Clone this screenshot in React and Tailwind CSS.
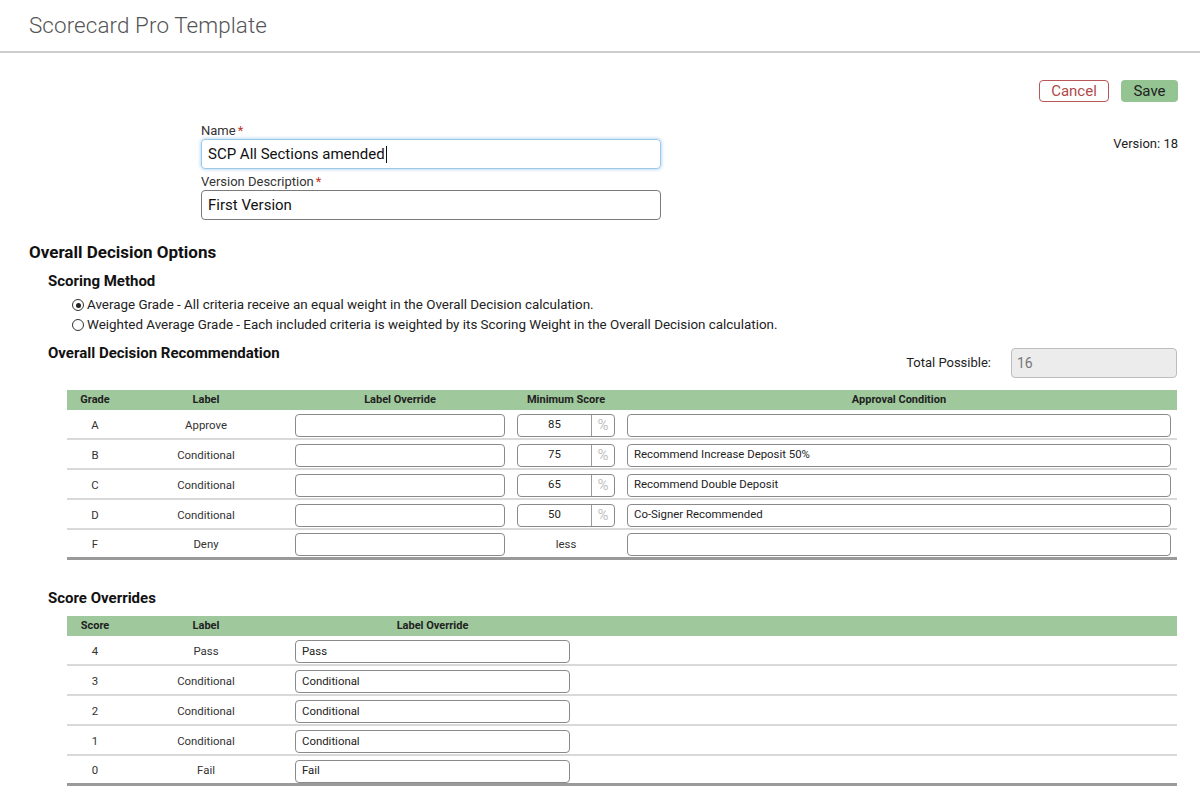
import React from "react";

const grades = [
  { g: "A", l: "Approve", min: "85", cond: "" },
  { g: "B", l: "Conditional", min: "75", cond: "Recommend Increase Deposit 50%" },
  { g: "C", l: "Conditional", min: "65", cond: "Recommend Double Deposit" },
  { g: "D", l: "Conditional", min: "50", cond: "Co-Signer Recommended" },
  { g: "F", l: "Deny", min: null, cond: "" },
];

const scores = [
  { s: "4", l: "Pass", o: "Pass" },
  { s: "3", l: "Conditional", o: "Conditional" },
  { s: "2", l: "Conditional", o: "Conditional" },
  { s: "1", l: "Conditional", o: "Conditional" },
  { s: "0", l: "Fail", o: "Fail" },
];

function Box({ children, className = "" }) {
  return (
    <div
      className={
        "h-[23px] rounded-[4px] border border-[#8a8a8a] bg-white flex items-center px-[6px] text-[11.4px] text-[#222] " +
        className
      }
    >
      {children}
    </div>
  );
}

function Radio({ checked }) {
  return (
    <span className="inline-flex w-[12px] h-[12px] rounded-full border border-[#333] items-center justify-center mr-[3px] shrink-0">
      {checked && <span className="w-[5px] h-[5px] rounded-full bg-[#222]" />}
    </span>
  );
}

export default function App() {
  return (
    <div
      className="w-[1200px] h-[812px] bg-white text-[#222] overflow-hidden"
      style={{ fontFamily: "Roboto, 'Liberation Sans', sans-serif" }}
    >
      {/* Header */}
      <div className="h-[53px] border-b-2 border-[#cdcdcd] flex items-center pl-[29px]">
        <div className="text-[22.4px] font-light text-[#555] tracking-[0.1px]">
          Scorecard Pro Template
        </div>
      </div>

      {/* Buttons */}
      <div className="flex justify-end gap-[12px] pr-[22px] pt-[27px]">
        <button className="h-[22px] w-[70px] rounded-[4px] border border-[#b75757] text-[#b04a4a] text-[15px] flex items-center justify-center leading-none">
          Cancel
        </button>
        <button className="h-[22px] w-[57px] rounded-[4px] bg-[#93c492] text-[#222] text-[15px] flex items-center justify-center leading-none">
          Save
        </button>
      </div>

      {/* Form */}
      <div className="flex mt-[21px] pr-[22px]">
        <div className="ml-[201px] w-[460px]">
          <div className="text-[13px] leading-[15px] text-[#333]">
            Name<span className="text-[#c0392b] ml-[2px]">*</span>
          </div>
          <div className="mt-[1px] h-[30px] rounded-[4px] border border-[#9cc9ea] shadow-[0_0_3px_1px_rgba(120,180,230,0.45)] flex items-center px-[6px] text-[15px] text-[#111]">
            SCP All Sections amended
            <span className="inline-block w-[1px] h-[17px] bg-[#111] ml-[1px]" />
          </div>
          <div className="mt-[5px] text-[13px] leading-[15px] text-[#333]">
            Version Description<span className="text-[#c0392b] ml-[2px]">*</span>
          </div>
          <div className="mt-[1px] h-[30px] rounded-[4px] border border-[#7a7a7a] flex items-center px-[6px] text-[15px] text-[#111]">
            First Version
          </div>
        </div>
        <div className="flex-1 text-right text-[13px] pt-[11px] text-[#222]">
          Version: 18
        </div>
      </div>

      {/* Overall Decision Options */}
      <div className="pl-[29px] pr-[23px]">
        <div className="mt-[22px] text-[17px] leading-[20px] font-bold text-[#111]">
          Overall Decision Options
        </div>
        <div className="ml-[19px]">
          <div className="mt-[10px] text-[15px] leading-[18px] font-bold text-[#111]">
            Scoring Method
          </div>
          <div className="ml-[24px] mt-[5px] text-[13.4px] text-[#222]">
            <div className="flex items-center h-[20px]">
              <Radio checked />
              Average Grade - All criteria receive an equal weight in the Overall Decision calculation.
            </div>
            <div className="flex items-center h-[20px]">
              <Radio />
              Weighted Average Grade - Each included criteria is weighted by its Scoring Weight in the Overall Decision calculation.
            </div>
          </div>

          <div className="mt-[9px] flex justify-between h-[34px]">
            <div className="text-[15px] leading-[18px] font-bold text-[#111]">
              Overall Decision Recommendation
            </div>
            <div className="flex items-center mt-[4px] h-[30px]">
              <span className="text-[13px] text-[#222] mr-[20px]">Total Possible:</span>
              <div className="w-[166px] h-[30px] rounded-[4px] border border-[#bdbdbd] bg-[#ececec] flex items-center px-[5px] text-[14px] text-[#777]">
                16
              </div>
            </div>
          </div>

          {/* Table 1 */}
          <div className="ml-[19px] mt-[12px]">
            <div className="grid grid-cols-[56px_166px_222px_110px_1fr] h-[20px] bg-[#9fc99c] items-center text-[11px] font-bold text-[#222]">
              <div className="text-center">Grade</div>
              <div className="text-center">Label</div>
              <div className="text-center">Label Override</div>
              <div className="text-center">Minimum Score</div>
              <div className="text-center">Approval Condition</div>
            </div>
            {grades.map((r, i) => (
              <div
                key={r.g}
                className={
                  "grid grid-cols-[56px_166px_222px_110px_1fr] h-[30px] pt-[2px] items-center text-[11.4px] text-[#333] " +
                  (i === grades.length - 1
                    ? "border-b-[3px] border-[#9a9a9a]"
                    : "border-b-2 border-[#d9d9d9]")
                }
              >
                <div className="text-center pt-[1px]">{r.g}</div>
                <div className="text-center pt-[1px]">{r.l}</div>
                <div className="px-[6px]">
                  <Box />
                </div>
                <div className="px-[6px]">
                  {r.min ? (
                    <div className="h-[23px] rounded-[4px] border border-[#8a8a8a] flex items-stretch text-[11.4px]">
                      <div className="flex-1 flex items-center justify-center text-[#222]">{r.min}</div>
                      <div className="w-[23px] border-l border-[#9a9a9a] flex items-center justify-center text-[15px] text-[#c2c2c2]">
                        %
                      </div>
                    </div>
                  ) : (
                    <div className="text-center pt-[1px]">less</div>
                  )}
                </div>
                <div className="px-[6px]">
                  <Box>{r.cond}</Box>
                </div>
              </div>
            ))}
          </div>

          <div className="mt-[29px] text-[15px] leading-[18px] font-bold text-[#111]">
            Score Overrides
          </div>

          {/* Table 2 */}
          <div className="ml-[19px] mt-[9px]">
            <div className="grid grid-cols-[56px_166px_287px_1fr] h-[20px] bg-[#9fc99c] items-center text-[11px] font-bold text-[#222]">
              <div className="text-center">Score</div>
              <div className="text-center">Label</div>
              <div className="text-center">Label Override</div>
              <div />
            </div>
            {scores.map((r, i) => (
              <div
                key={r.s}
                className={
                  "grid grid-cols-[56px_166px_287px_1fr] h-[30px] pt-[3px] items-center text-[11.4px] text-[#333] " +
                  (i === scores.length - 1
                    ? "border-b-[3px] border-[#9a9a9a]"
                    : "border-b-2 border-[#d9d9d9]")
                }
              >
                <div className="text-center">{r.s}</div>
                <div className="text-center">{r.l}</div>
                <div className="px-[6px]">
                  <Box>{r.o}</Box>
                </div>
                <div />
              </div>
            ))}
          </div>
        </div>
      </div>
    </div>
  );
}
